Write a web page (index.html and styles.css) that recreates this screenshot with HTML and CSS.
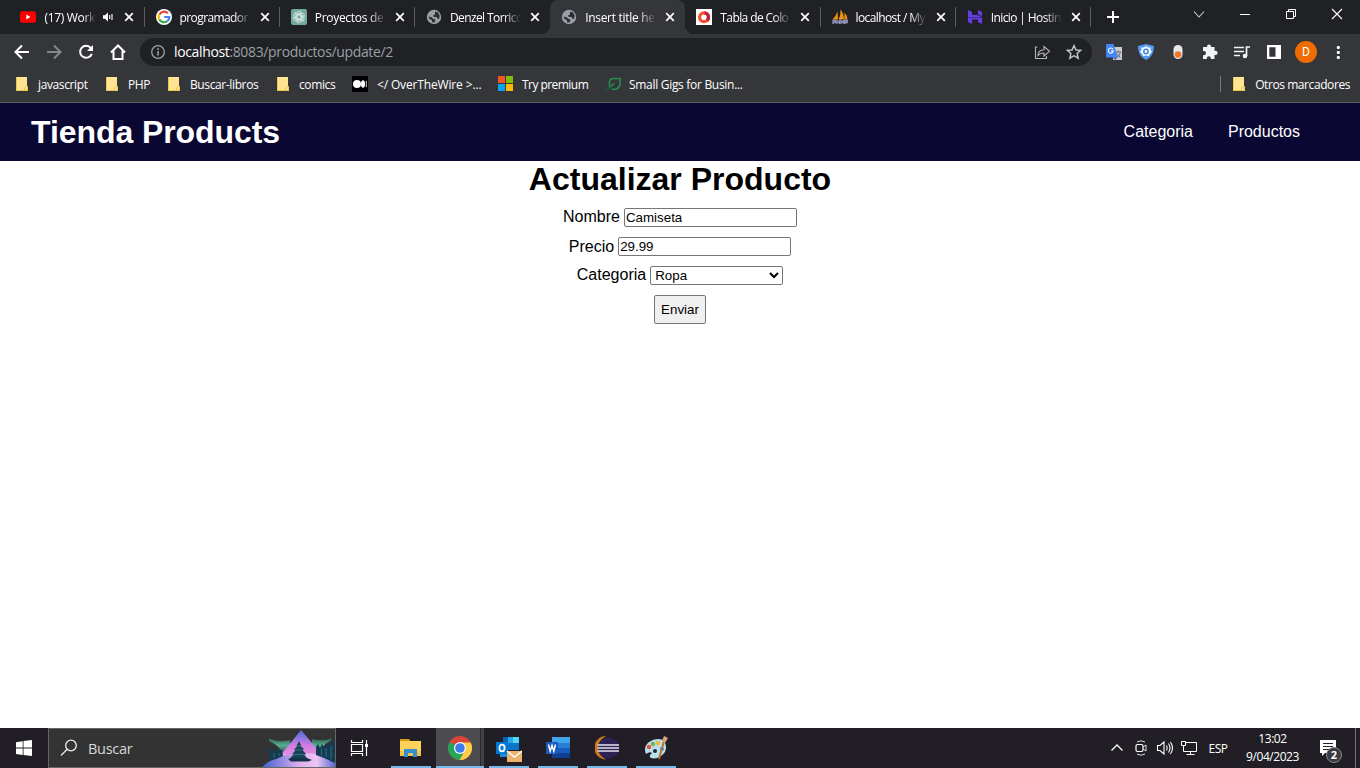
FILE: index.html
```html
<!DOCTYPE html>
<html lang="es">
<head>
<meta charset="utf-8">
<title>Tienda Products</title>
<link rel="stylesheet" href="styles.css">
</head>
<body>
<svg class="defs" width="0" height="0">
  <symbol id="close" viewBox="0 0 10 10"><path d="M1.2 1.2 8.8 8.8M8.8 1.2 1.2 8.8" stroke="#fff" stroke-width="1.7"/></symbol>
  <symbol id="folder" viewBox="0 0 12 14"><path d="M0 0H11V9.5H12V14H0Z" fill="#ffe591"/><path d="M.5 0V13.5H8.5V10.5L10 9.5H11.500V13.500H8.500" fill="none" stroke="#eac54f"/></symbol>
  <symbol id="globe" viewBox="0 0 16 16"><circle cx="8" cy="8" r="7.200" fill="#9aa0a6"/><path d="M9 2.500 12 3.500 13.600 6.500 13.300 9.500 11.500 10 10.800 8H7.800L7 6.500 9 5.500V4Z" fill="#2b2d30"/><path d="M2.300 7.500 5.500 8.300 7.500 10 9.500 10.500 8.500 13.600 6 13.200V11L3.800 10.300Z" fill="#2b2d30"/></symbol>
</svg>

<header class="tabstrip">
  <div class="tab"><svg class="fav" viewBox="0 0 16 16"><rect y="2.200" width="16" height="11.600" rx="2.500" fill="#f00"/><path d="M6.300 5.500v5L10.500 8Z" fill="#fff"/></svg><span class="title short">(17) Work</span><svg class="sound" viewBox="0 0 10 10"><path d="M0 3.200H2L5 .5V9.500L2 6.800H0Z" fill="#fff"/><path d="M6.700 3V7M9 2V8" stroke="#fff" stroke-width="1.100"/></svg><svg class="x"><use href="#close"/></svg></div>
  <div class="tab"><svg class="fav" viewBox="0 0 16 16"><circle cx="8" cy="8" r="8" fill="#fff"/><g fill="none" stroke-width="2.200"><path d="M11.800 4.300A5.300 5.300 0 0 0 3.400 5.400" stroke="#ea4335"/><path d="M3.400 5.400A5.300 5.300 0 0 0 3.400 10.600" stroke="#fbbc05"/><path d="M3.400 10.600A5.300 5.300 0 0 0 11.400 12" stroke="#34a853"/><path d="M11.400 12A5.300 5.300 0 0 0 13.300 8H8.200" stroke="#4285f4"/></g></svg><span class="title tight">programador</span><svg class="x"><use href="#close"/></svg></div>
  <div class="tab"><svg class="fav" viewBox="0 0 16 16"><rect width="16" height="16" rx="2" fill="#74aa9c"/><g fill="none" stroke="#fff" stroke-width=".65"><path id="petal" d="M6 8.900V4.500Q6.200 2.300 8.300 2.300 9.500 2.300 10.300 3.200L6 5.700"/><use href="#petal" transform="rotate(60 8 8)"/><use href="#petal" transform="rotate(120 8 8)"/><use href="#petal" transform="rotate(180 8 8)"/><use href="#petal" transform="rotate(240 8 8)"/><use href="#petal" transform="rotate(300 8 8)"/></g></svg><span class="title">Proyectos de</span><svg class="x"><use href="#close"/></svg></div>
  <div class="tab nosep"><svg class="fav"><use href="#globe"/></svg><span class="title tight">Denzel Torrico</span><svg class="x"><use href="#close"/></svg></div>
  <div class="tab active"><svg class="fav"><use href="#globe"/></svg><span class="title">Insert title here</span><svg class="x"><use href="#close"/></svg></div>
  <div class="tab"><svg class="fav" viewBox="0 0 16 16"><rect width="16" height="16" fill="#fff"/><circle cx="8" cy="8.200" r="4.400" fill="none" stroke="#f4512c" stroke-width="3.200"/><path d="M8.500 3.800A4.400 4.400 0 0 1 11 11.500" fill="none" stroke="#c51f3c" stroke-width="3.200"/></svg><span class="title tight">Tabla de Colo</span><svg class="x"><use href="#close"/></svg></div>
  <div class="tab"><svg class="fav" viewBox="0 0 16 16"><path d="M.5 10.500Q4 7 5.500 2.500L6 10.500ZM6.500 10.500Q9 6 8.500.5 12 5 12 10.500ZM12.500 10.500V3.500Q15 6 15.500 10.500Z" fill="#f29111"/><path d="M1 15V11.500H3.500V13.500H1M5 11V15M5 13H7.500M7.500 11V15M9 15V11.500L10.500 13.500 12 11.500V15M13 15V11.500H15.300V13.500H13" stroke="#9294bd" fill="none" stroke-width="1.300"/></svg><span class="title tight">localhost / My</span><svg class="x"><use href="#close"/></svg></div>
  <div class="tab"><svg class="fav" viewBox="0 0 16 16"><path d="M1 1 5 3V6H11L15 8.200H1ZM11 1 15 3V7.200L11 5ZM1 8.800 5 11V15L1 13ZM1 8.800H15V15L11 13V10.500H4Z" fill="#673de6"/></svg><span class="title tight">Inicio | Hostin</span><svg class="x"><use href="#close"/></svg></div>
  <svg class="newtab" viewBox="0 0 14 14"><path d="M7 1V13M1 7H13" stroke="#fff" stroke-width="2"/></svg>
  <div class="winctl">
    <svg viewBox="0 0 46 28"><path d="M18 11.500 23 17 28 11.500" fill="none" stroke="#ccc" stroke-width="1.100"/></svg>
    <svg viewBox="0 0 46 28"><path d="M18 14.500H28" stroke="#fff"/></svg>
    <svg viewBox="0 0 46 28"><path d="M18.500 11.500H25.500V18.500H18.500ZM20.500 11.500V9.500H27.500V16.500H25.500" fill="none" stroke="#fff"/></svg>
    <svg viewBox="0 0 46 28"><path d="M18 9 28 19M28 9 18 19" stroke="#fff" stroke-width="1.100"/></svg>
  </div>
</header>

<nav class="toolbar">
  <svg class="tool" viewBox="0 0 32 32"><path d="M23 16H10M16 9.500 9.500 16 16 22.500" fill="none" stroke="#fff" stroke-width="2"/></svg>
  <svg class="tool" viewBox="0 0 32 32"><path d="M9 16H22M16 9.500 22.500 16 16 22.500" fill="none" stroke="#85868a" stroke-width="2"/></svg>
  <svg class="tool" viewBox="0 0 32 32"><path d="M20.800 12A6 6 0 1 0 21.800 17.800" fill="none" stroke="#fff" stroke-width="2"/><path d="M23 9V15H17Z" fill="#fff"/></svg>
  <svg class="tool" viewBox="0 0 32 32"><path d="M9 16.500 16 9.500 23 16.500M11.500 15V23H20.500V15" fill="none" stroke="#fff" stroke-width="2"/></svg>
  <div class="omnibox">
    <svg class="info" viewBox="0 0 16 16"><circle cx="8" cy="8" r="6.300" fill="none" stroke="#9aa0a6" stroke-width="1.300"/><path d="M8 7V11.500M8 4.300V5.900" stroke="#9aa0a6" stroke-width="1.600"/></svg>
    <span class="url"><b>localhost</b>:8083/productos/update/2</span>
    <svg class="tool" viewBox="0 0 32 32"><path d="M11.500 11H9.500V22.500H20.500V20M12 19.500Q12 14 18 13.700V10.500L23.500 15.300 18 20V17Q14 17 12 19.500Z" fill="none" stroke="#b4b5b8" stroke-width="1.100"/></svg>
    <svg class="tool" viewBox="0 0 32 32"><path d="M16 9.500 18 14 22.700 14.400 19.100 17.500 20.200 22.200 16 19.700 11.800 22.200 12.900 17.500 9.300 14.400 14 14Z" fill="none" stroke="#c6c7ca" stroke-width="1.400"/></svg>
  </div>
  <div class="extensions">
    <svg class="tool" viewBox="0 0 32 32"><rect x="15" y="11" width="9" height="13" fill="#ccc"/><path d="M17 16H23M20 14.500V16M22.500 16Q21.500 20 18.500 22M18.500 17.500 22.500 22" stroke="#667" fill="none"/><path d="M8 8H15.500L20 21.500H9Q8 21.500 8 20.500Z" fill="#4285f4"/><path d="M18.500 21.500H14.500L18 24Z" fill="#2a56c6"/><path d="M15 13.300A2.500 2.500 0 1 0 15.300 15H13" fill="none" stroke="#fff" stroke-width="1.100"/></svg>
    <svg class="tool" viewBox="0 0 32 32"><path d="M8 10 16 8 24 10Q24 20 16 24 8 20 8 10Z" fill="#569bf5"/><path d="M16 10 18 11.500 20.500 11.500 20.500 14 22 16 19.800 17.700 19 20 16 19.500 13 20 12.200 17.700 10 16 11.500 14V11.500H14Z" fill="#fff"/><circle cx="16" cy="15.500" r="2.200" fill="none" stroke="#3d83e2" stroke-width="1.500"/></svg>
    <svg class="tool" viewBox="0 0 32 32"><rect x="11.500" y="9" width="9" height="14" rx="4.500" fill="#e8e8e8"/><circle cx="16" cy="18.500" r="3.300" fill="#f0762b"/></svg>
    <svg class="tool" viewBox="0 0 32 32"><path d="M9 11H13V10.500A2 2 0 0 1 17 10.500V11H20.500V14.800H21.500A2.100 2.100 0 0 1 21.500 19H20.500V23H16.800V22.200A2 2 0 0 0 12.800 22.200V23H9V19.300H9.800A2.200 2.200 0 0 0 9.800 14.900H9Z" fill="#f1f3f4"/></svg>
    <svg class="tool" viewBox="0 0 32 32"><path d="M8 11.500H18M8 15.500H18M8 19.500H14M20.500 20V11H24" stroke="#f1f3f4" stroke-width="1.700" fill="none"/><circle cx="19" cy="20" r="2.300" fill="#f1f3f4"/></svg>
    <svg class="tool" viewBox="0 0 32 32"><path d="M9 9H23V23H9ZM11.300 11.300V20.700H17.500V11.300Z" fill="#fff" fill-rule="evenodd"/></svg>
    <span class="avatar">D</span>
    <svg class="tool" viewBox="0 0 32 32"><g fill="#fff"><rect x="14.800" y="10" width="3" height="3" rx="1"/><rect x="14.800" y="15" width="3" height="3" rx="1"/><rect x="14.800" y="20" width="3" height="3" rx="1"/></g></svg>
  </div>
</nav>

<nav class="bookmarks">
  <a class="bm w1"><svg class="folder"><use href="#folder"/></svg><span>javascript</span></a>
  <a class="bm w2"><svg class="folder"><use href="#folder"/></svg><span>PHP</span></a>
  <a class="bm w3"><svg class="folder"><use href="#folder"/></svg><span>Buscar-libros</span></a>
  <a class="bm w4"><svg class="folder"><use href="#folder"/></svg><span>comics</span></a>
  <a class="bm w5"><svg class="site" viewBox="0 0 16 16"><rect width="16" height="16" fill="#000"/><circle cx="5" cy="8" r="4" fill="#fff"/><ellipse cx="11" cy="8" rx="2" ry="3.800" fill="#fff"/><path d="M14.300 4.800V11.200" stroke="#ccc"/></svg><span>&lt;/ OverTheWire &gt;...</span></a>
  <a class="bm w6"><svg class="site" viewBox="0 0 16 16"><path d="M0 0H7V7H0Z" fill="#f35325"/><path d="M8 0H15V7H8Z" fill="#81bc06"/><path d="M0 8H7V15H0Z" fill="#05a6f0"/><path d="M8 8H15V15H8Z" fill="#ffba08"/></svg><span>Try premium</span></a>
  <a class="bm leaf"><svg class="site" viewBox="0 0 16 16"><path d="M3.500 12V6Q3.500 2.500 7.500 2.500H14V8Q13 13.300 8 13.300H5.500M3.500 12 8 7.500" fill="none" stroke="#20934c" stroke-width="1.500"/><path d="M0 13.500Q3 13.500 4.500 10.500" fill="none" stroke="#145e31" stroke-width="1.500"/></svg><span>Small Gigs for Busin...</span></a>
  <div class="others"><svg class="folder"><use href="#folder"/></svg><span>Otros marcadores</span></div>
</nav>

<section class="page">
  <div class="sitebar">
    <h1>Tienda Products</h1>
    <ul><li>Categoria</li><li>Productos</li></ul>
  </div>
  <main>
    <h1>Actualizar Producto</h1>
    <form>
      <label class="pick">Nombre <input type="text" value="Camiseta"></label>
      <label>Precio <input type="text" value="29.99"></label>
      <label class="pick">Categoria <select><option>Ropa</option></select></label>
      <button type="button">Enviar</button>
    </form>
  </main>
</section>

<footer class="taskbar">
  <svg class="start" viewBox="0 0 48 40"><path d="M16 14.200 22.700 13.200V19.500H16ZM23.500 13.100 32 12V19.500H23.500ZM16 20.500H22.700V26.900L16 25.900ZM23.500 20.500H32V28L23.500 27Z" fill="#fff"/></svg>
  <div class="search">
    <svg class="lens" viewBox="0 0 18 18"><circle cx="11" cy="6.500" r="5.300" fill="none" stroke="#eee" stroke-width="1.300"/><path d="M7.200 10.300 1 16.500" stroke="#eee" stroke-width="1.300"/></svg>
    <span>Buscar</span>
    <svg class="scene" viewBox="0 0 73 38">
      <defs><linearGradient id="sky" x2="0" y2="1"><stop offset="0" stop-color="#4e68d8"/><stop offset=".6" stop-color="#c681e6"/><stop offset="1" stop-color="#f2a9e8"/></linearGradient><linearGradient id="snow"><stop offset="0" stop-color="#3d5fd0"/><stop offset=".5" stop-color="#dcaef0"/><stop offset=".75" stop-color="#eec4f2"/><stop offset="1" stop-color="#596ad5"/></linearGradient><linearGradient id="aurora" x2="0" y2="1"><stop offset="0" stop-color="#2f5a50"/><stop offset=".5" stop-color="#58ae92"/><stop offset="1" stop-color="#3b4a50"/></linearGradient></defs>
      <path d="M7 9Q15 14 28 11L29 20 20 24Q18 17 7 12ZM70 9Q62 13 50 10L50 20 58 22Q62 15 70 11Z" fill="url(#aurora)"/>
      <path d="M39 1 61 27H18Z" fill="url(#sky)"/><path d="M18 25 27 17 39 12 50 18 60 27Z" fill="#dc75d8" opacity=".5"/>
      <path d="M0 38Q10 28 30 25 55 21 73 34V38Z" fill="url(#snow)"/>
      <path d="M7 32V22L8 19 10 22 12 20 14 22 16 19 18 22 20 20 21 27 14 30ZM54 26V18L56 15 58 19 60 15 62 18 64 14 67 18 70 9 73 15V34L62 29Z" fill="#163a51"/>
      <path d="M26 30Q38 25 50 31L46 32.500H29Z" fill="#143348"/><path d="M37 12 39 16 38.500 17 42 20 40.500 21 44 25 42 25.500 45 29H28L32 25.500 30 25.500 33.500 21 32 20.500 35.500 17H34.500Z" fill="#184359"/><path d="M35.500 17H39M33.500 21H40M32 25.500H43" stroke="#397080"/>
      <path d="M59.500 20V27M64 19V28M69 17V30M12 24V29M17 24V27" stroke="#237087"/>
    </svg>
  </div>
  <svg class="app view" viewBox="0 0 48 40"><path d="M15.500 12V14.500H26.500V12M15.500 28V25.500H26.500V28M15.500 16.500H26.500V23.500H15.500ZM30.500 12V28" fill="none" stroke="#fff" stroke-width="1.200"/><path d="M29 16H32V19H29Z" fill="#fff"/></svg>
  <div class="apps">
    <span class="app run"><svg viewBox="0 0 24 24"><path d="M1 3H10L12 6H1Z" fill="#d89a12"/><path d="M1 5H22V20H1Z" fill="#ffd35b"/><path d="M1 15H22V20H1Z" fill="#f5c247"/><path d="M5 13H18V21H14V17H9V21H5Z" fill="#338fd0"/></svg></span>
    <span class="app run current"><svg viewBox="0 0 24 24"><circle cx="12" cy="12" r="12" fill="#dc4437"/><path d="M1.600 6 12 12 16.700 15 11.500 24A12 12 0 0 1 1.600 6Z" fill="#22a657"/><path d="M12 6.500H22.700A12 12 0 0 1 11.500 24L17 14.500Z" fill="#ffcd42"/><circle cx="12" cy="12" r="6" fill="#fff"/><circle cx="12" cy="12" r="4.800" fill="#3e7ce9"/></svg></span>
    <span class="app run"><svg viewBox="0 0 26 26"><path d="M7 1H23V14H7Z" fill="#0364b8"/><path d="M12 1H17V7H12Z" fill="#28a8ea"/><path d="M17 1H23V8H17Z" fill="#50d9ff"/><path d="M12 7H23V14H12Z" fill="#0c75c9"/><path d="M4 17H14V21H4Z" fill="#1490df"/><path d="M0 6H12V18H0Z" fill="#0078d4"/><ellipse cx="6" cy="12" rx="2.600" ry="3.300" fill="none" stroke="#fff" stroke-width="1.800"/><path d="M11 15H26V26H11Z" fill="#edb36c"/><path d="M11 15 18.500 21 26 15" fill="none" stroke="#fff" stroke-width="1.500"/></svg></span>
    <span class="app run"><svg viewBox="0 0 24 24"><path d="M6 1H24V7H6Z" fill="#41a5ee"/><path d="M6 7H24V12H6Z" fill="#2b7cd3"/><path d="M6 12H24V17H6Z" fill="#185abd"/><path d="M6 17H24V22H6Z" fill="#103f91"/><path d="M0 6H12V18H0Z" fill="#185abd"/><path d="M2.500 8.500 4.200 15 6 9.500 7.800 15 9.500 8.500" fill="none" stroke="#fff" stroke-width="1.500"/></svg></span>
    <span class="app run"><svg viewBox="0 0 24 24"><path d="M11 0A11.500 11.500 0 0 0 11 23.500Q3 19 3 12T11 0Z" fill="#c9781f"/><circle cx="13.500" cy="12" r="10.500" fill="#2c2255"/><path d="M2.500 9H24M2.500 12H24M2.500 15H24" stroke="#e6e3f0" stroke-width="1.500"/></svg></span>
    <span class="app run"><svg viewBox="0 0 24 24"><path d="M2 18Q-1 11 5 6 12 1 19 4 24 9 21 16 15 24 7 22 4 20 8 17 6 15 2 18Z" fill="#b9dfed"/><circle cx="5" cy="11" r="2.200" fill="#e34d42"/><circle cx="9" cy="8" r="2.200" fill="#7db343"/><circle cx="14" cy="7" r="2.200" fill="#f4b735"/><circle cx="18" cy="13" r="2" fill="#3b89d0"/><circle cx="11" cy="15" r="2" fill="#1f2939"/><path d="M20 5 15 23" stroke="#b9702f" stroke-width="2"/><path d="M18 5 20 0 24 2 21 7Z" fill="#d8a677"/></svg></span>
  </div>
  <div class="tray">
    <svg viewBox="0 0 24 24"><path d="M6.500 14.500 12 9 17.500 14.500" fill="none" stroke="#fff" stroke-width="1.300"/></svg>
    <svg viewBox="0 0 24 24"><rect x="7" y="8.500" width="7" height="7" rx="1.500" fill="none" stroke="#fff" stroke-width="1.200"/><path d="M14 11 17 9V15L14 13M8 6Q12 3.500 16 6M8 18Q12 20.500 16 18" fill="none" stroke="#ddd"/></svg>
    <svg viewBox="0 0 24 24"><path d="M4.500 9.500H7L11 6V18L7 14.500H4.500ZM13.500 9.500Q15 12 13.500 14.500M15.500 7.500Q18.500 12 15.500 16.500M17.500 6Q21.500 12 17.500 18" fill="none" stroke="#fff" stroke-width="1.100"/></svg>
    <svg viewBox="0 0 24 24"><path d="M8 6.500H19.500V15.500H6.500V10M13.500 15.500V18.500M9.500 18.500H17.500" fill="none" stroke="#fff"/><path d="M4.500 5.500H8.500V9.500H4.500ZM6.500 9.500V13" fill="none" stroke="#fff"/></svg>
    <span class="lang">ESP</span>
    <div class="clock"><span>13:02</span><span>9/04/2023</span></div>
    <div class="notes"><svg viewBox="0 0 18 16"><path d="M1 0H17V13H6L3 16V13H1Z" fill="#fff"/><path d="M4 3.500H14M4 6.500H14M4 9.500H10" stroke="#222" stroke-width="1.100"/></svg><b>2</b></div>
  </div>
</footer>
</body>
</html>
```
FILE: styles.css
```css
* { box-sizing: border-box; }
body { margin: 0; width: 1360px; height: 768px; overflow: hidden; display: flex; flex-direction: column; background: #fff; font-family: "Open Sans", "Noto Sans", sans-serif; font-size: 12px; color: #fff; }
svg { display: block; flex: none; }
.defs { position: absolute; }

.tabstrip { height: 34px; flex: none; background: #202124; display: flex; padding-left: 9.400px; }
.tab { position: relative; width: 135.200px; flex: none; display: flex; align-items: center; padding-left: 11px; }
.tab::after { content: ""; position: absolute; right: 0; top: 7px; width: 1px; height: 20px; background: #5b5c60; }
.tab.nosep::after { display: none; }
.fav { width: 16px; height: 16px; margin-right: 8px; }
.title { width: 71px; white-space: nowrap; letter-spacing: -.3px; -webkit-mask-image: linear-gradient(90deg, #000 76%, transparent); mask-image: linear-gradient(90deg, #000 76%, transparent); }
.title.tight { letter-spacing: -.6px; }
.title.short { width: 52px; margin-right: 7px; }
.sound { width: 10px; height: 10px; }
.x { width: 10px; height: 10px; margin-left: 9px; }
.sound + .x { margin-left: 11px; }
.active { background: #35363a; border-radius: 8px 8px 0 0; }
.active::before, .tab.active::after { content: ""; position: absolute; top: auto; right: auto; bottom: 0; width: 8px; height: 8px; }
.active::before { left: -8px; background: radial-gradient(circle at 0 0, transparent 7.5px, #35363a 8px); }
.tab.active::after { left: 100%; background: radial-gradient(circle at 100% 0, transparent 7.5px, #35363a 8px); }
.newtab { width: 14px; height: 14px; margin: 10px 0 0 15px; }
.winctl { display: flex; margin-left: auto; }
.winctl svg { width: 46px; height: 28px; }

.toolbar { height: 36px; flex: none; background: #35363a; display: flex; align-items: center; padding: 0 6px; }
.tool { width: 32px; height: 32px; }
.omnibox { width: 952px; height: 28px; margin-left: 6px; border-radius: 14px; background: #202124; display: flex; align-items: center; padding: 0 2px 0 10px; }
.info { width: 16px; height: 16px; margin-right: 8px; }
.url { flex: 1; font-size: 14px; line-height: 20px; letter-spacing: -.36px; color: #9aa0a6; }
.url b { font-weight: 400; color: #fff; }
.extensions { display: flex; align-items: center; margin-left: 6px; }
.avatar { width: 22px; height: 22px; margin: 0 5px; border-radius: 50%; background: #ef6c00; text-align: center; line-height: 22px; font-family: Roboto, sans-serif; }

.bookmarks { height: 33px; flex: none; background: #35363a; border-bottom: 1px solid #5d5e60; display: flex; align-items: center; padding: 0 10px 4px 16px; letter-spacing: -.38px; }
.bm { display: flex; align-items: center; white-space: nowrap; }
.folder { width: 12px; height: 14px; margin-right: 10px; }
.site { width: 16px; height: 16px; margin-right: 9px; }
.w1 { width: 90px; } .w2 { width: 62px; } .w3 { width: 109px; } .w4 { width: 75px; } .w5 { width: 146px; letter-spacing: -.15px; } .w6 { width: 108px; letter-spacing: -.55px; }
.w6 .site { margin-right: 8px; }
.leaf { letter-spacing: -.3px; }
.leaf .site { margin-right: 7px; }
.others { margin-left: auto; height: 16px; border-left: 1px solid #77787b; padding-left: 12px; display: flex; align-items: center; letter-spacing: -.42px; }

.page { flex: 1; font-family: Arial, "Liberation Sans", sans-serif; font-size: 16px; color: #000; }
.page h1 { margin: 0; font-size: 32px; line-height: 37px; }
.sitebar { height: 58px; background: #0a0733; color: #fff; display: flex; justify-content: space-between; align-items: center; padding: 0 60px 0 31px; }
.sitebar h1 { letter-spacing: -.07px; }
.sitebar ul { display: flex; gap: 35px; list-style: none; margin: 0; padding: 0; }
main { text-align: center; }
form { display: flex; flex-direction: column; align-items: center; gap: 10px; padding-top: 10px; }
label { display: flex; height: 19px; gap: 4px; align-items: center; line-height: 17px; }
.pick { align-items: flex-start; }
input, select, button { font-family: Arial, "Liberation Sans", sans-serif; font-size: 13.333px; color: #000; margin: 0; border: 1px solid #767676; border-radius: 2px; }
input { width: 173px; height: 19px; padding: 1px 2px 1px 1px; }
select { width: 133px; height: 19px; background-color: #fff; }
button { width: 52px; height: 29px; padding: 0; background: #efefef; }

.taskbar { height: 40px; flex: none; background: #211f25; display: flex; }
.start { width: 48px; height: 40px; }
.search { width: 288px; height: 40px; background: #333; border: 1px solid #666; display: flex; align-items: center; padding-left: 11px; font-size: 14.500px; letter-spacing: -.3px; color: #d8d8d8; }
.lens { width: 18px; height: 18px; margin-right: 10px; }
.scene { width: 73px; height: 38px; margin-left: auto; }
.app { height: 40px; }
.view { width: 48px; }
.apps { display: flex; gap: 9px; padding-left: 7px; }
.run { width: 40px; display: flex; align-items: center; justify-content: center; border-bottom: 2px solid #76b9ed; }
.run svg { width: 24px; height: 24px; margin-top: 2px; }
.run:nth-child(3) svg { width: 26px; height: 26px; margin-top: 4px; }
.current { width: 48px; margin: 0 -4px; padding-right: 1px; background: linear-gradient(90deg, #4b4b50 44px, #29282d 44px, #29282d 45px, #414146 45px); }
.tray { margin-left: auto; display: flex; align-items: center; padding-right: 4px; }
.tray svg { width: 24px; height: 24px; }
.lang { width: 32px; padding-left: 2px; text-align: center; letter-spacing: -.5px; }
.clock { width: 79px; display: flex; flex-direction: column; text-align: center; line-height: 18px; letter-spacing: -.45px; }
.notes { position: relative; width: 44px; height: 40px; padding: 12px 0 0 7px; border-right: 1px solid #737278; }
.notes svg { width: 18px; height: 16px; }
.notes b { position: absolute; left: 14px; top: 19px; width: 16px; height: 16px; border: 1px solid #888; border-radius: 50%; background: #3b3a3f; text-align: center; line-height: 14px; font-size: 11px; }
```
